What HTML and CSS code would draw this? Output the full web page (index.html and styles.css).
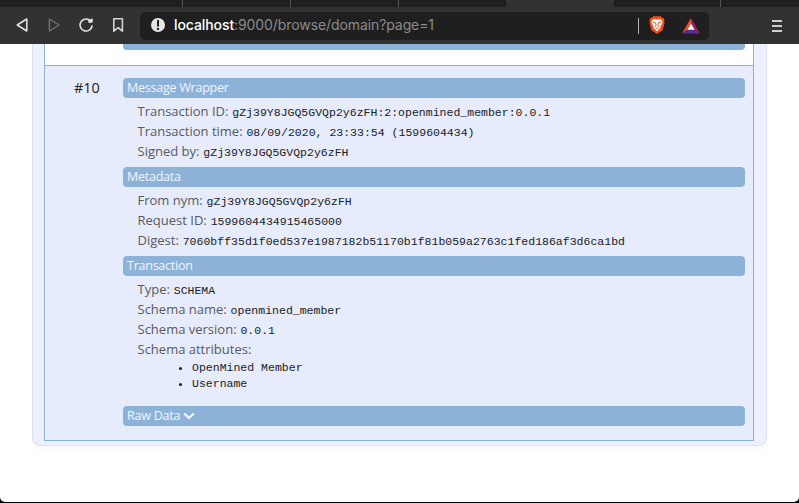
FILE: index.html
```html
<!DOCTYPE html>
<html lang="en">
<head>
<meta charset="utf-8">
<title>Browse domain</title>
<link rel="stylesheet" href="styles.css">
</head>
<body>
<div class="window">
  <header class="chrome">
    <div class="tabs"><i class="first"></i><i></i><i></i><i></i><i class="active"></i><i></i><i class="last"></i></div>
    <div class="toolbar">
      <nav class="nav">
        <svg width="14" height="16" viewBox="0 0 14 16"><path d="M11.8 2v12L2.2 8z" fill="none" stroke="#e4e4e4" stroke-width="1.5" stroke-linejoin="round"/></svg>
        <svg width="14" height="16" viewBox="0 0 14 16"><path d="M2.400 2v12L12 8z" fill="none" stroke="#707070" stroke-width="1.4" stroke-linejoin="round"/></svg>
        <svg width="14" height="16" viewBox="0 0 14 16"><path d="M9.600 2.600A6 6 0 1 0 13 9" fill="none" stroke="#e4e4e4" stroke-width="1.6" stroke-linecap="round"/><path d="M9 3.300 12.800 1.500c.7 0 .9.3.9.8v3.200l-4 .4z" fill="#e4e4e4"/></svg>
        <svg width="14" height="16" viewBox="0 0 14 16"><path d="M2.800 1.800h8.600v12.400L7.100 10.700 2.800 14.200z" fill="none" stroke="#d4d4d4" stroke-width="1.6" stroke-linejoin="round"/></svg>
      </nav>
      <div class="address">
        <svg class="info" width="14" height="14" viewBox="0 0 14 14"><circle cx="7" cy="7" r="7" fill="#e6e6e6"/><path d="M7 2.700v5" stroke="#1f1f1f" stroke-width="2" stroke-linecap="round"/><circle cx="7" cy="10.900" r="1.200" fill="#1f1f1f"/></svg>
        <span class="url"><b>localhost</b>:9000/browse/domain?page=1</span>
        <span class="divider"></span>
        <svg class="lion" width="16" height="18" viewBox="0 0 16 18"><path d="M4.200.3h7.600l1.300 1.500 1.600.2.9 2.200-.4 1.400.3 1.700-2 7L8 17.900l-5.500-3.600-2-7 .3-1.700-.4-1.400L1.300 2l1.600-.2z" fill="#f4501e"/><path d="M4.500 3 8 3.500 11.500 3l2 2.600-.5 2.500-1.800 2.500.3 1.400L8 15.300 4.500 12l.3-1.400L3 8.100l-.5-2.500z" fill="#fff"/><path d="m3.700 6 3 .8.4 3L5.700 11M12.300 6l-3 .8-.4 3 1.400 1.200M6.500 12.700 8 11.800l1.500.9" fill="none" stroke="#f4501e" stroke-width="1"/></svg>
        <svg class="bat" width="18" height="16" viewBox="0 0 18 16"><path d="M9 0v5.500L5.500 11.600 0 15.500z" fill="#ff4724"/><path d="m9 0 9 15.500-5.500-3.900L9 5.500z" fill="#9e1f63"/><path d="M0 15.500 5.500 11.600h7l5.500 3.900z" fill="#5c2d91"/><path d="m9 5.500 3.600 6.300H5.400z" fill="#fff"/></svg>
      </div>
      <svg class="menu" width="10" height="12" viewBox="0 0 10 12"><path d="M0 1h10M0 6h10M0 11h10" stroke="#cfcfcf" stroke-width="2"/></svg>
    </div>
  </header>
  <main class="page">
    <section class="card">
      <div class="table">
        <div class="row previous"><div class="bar"></div></div>
        <div class="row">
          <div class="index">#10</div>
          <div class="details">
            <h2 class="bar">Message Wrapper</h2>
            <div class="fields">
              <p>Transaction ID: <code>gZj39Y8JGQ5GVQp2y6zFH:2:openmined_member:0.0.1</code></p>
              <p>Transaction time: <code>08/09/2020, 23:33:54 (1599604434)</code></p>
              <p>Signed by: <code>gZj39Y8JGQ5GVQp2y6zFH</code></p>
            </div>
            <h2 class="bar">Metadata</h2>
            <div class="fields">
              <p>From nym: <code>gZj39Y8JGQ5GVQp2y6zFH</code></p>
              <p>Request ID: <code>1599604434915465000</code></p>
              <p>Digest: <code>7060bff35d1f0ed537e1987182b51170b1f81b059a2763c1fed186af3d6ca1bd</code></p>
            </div>
            <h2 class="bar">Transaction</h2>
            <div class="fields schema">
              <p>Type: <code>SCHEMA</code></p>
              <p>Schema name: <code>openmined_member</code></p>
              <p>Schema version: <code>0.0.1</code></p>
              <p>Schema attributes:</p>
              <ul><li>OpenMined Member</li><li>Username</li></ul>
            </div>
            <h2 class="bar">Raw Data <svg width="12" height="8" viewBox="0 0 12 8"><path d="m1.200 1.500 4.800 4.500 4.800-4.500" fill="none" stroke="#f3f6fd" stroke-width="2.300"/></svg></h2>
          </div>
        </div>
      </div>
    </section>
  </main>
</div>
</body>
</html>
```
FILE: styles.css
```css
* { box-sizing: border-box; }
body { margin: 0; background: #000; overflow: hidden; }
.window { height: 502px; background: #fff; border-radius: 0 0 5px 5px; overflow: hidden; }
.chrome { height: 44px; background: #323232; }
.tabs { display: flex; height: 7px; }
.tabs i { width: 108px; background: #1f1f1f; border-left: 1px solid #555; }
.tabs .first { width: 182px; border-left: 0; }
.tabs .active { background: #323232; border-left: 0; }
.tabs .active + i { width: 106px; border-left: 0; }
.tabs .last { flex: 1; }
.toolbar { display: flex; align-items: center; height: 37px; padding: 0 17px 0 15px; }
.nav { display: flex; gap: 18px; width: 125px; position: relative; top: -1px; }
.nav svg { display: block; }
.address { display: flex; align-items: center; width: 569px; height: 28px; padding-left: 11px; border-radius: 5px; background: #1f1f1f; }
.info { position: relative; top: -1px; }
.url { width: 464px; margin: -2px 0 0 9px; font: 14px/20px Inter, sans-serif; letter-spacing: -.09px; color: #8b8b8b; white-space: nowrap; }
.url b { color: #fff; font-weight: 500; }
.divider { width: 1px; height: 16px; background: #b0b0b0; }
.lion { margin: -1px 0 0 10px; }
.bat { margin-left: 17px; }
.menu { margin-left: auto; }
.page { padding: 0 32px; font-family: "Open Sans", sans-serif; }
.card { height: 402px; padding: 0 12px 5px 11px; background: #edf0fe; border: 1px solid #dbe1f0; border-top: 0; border-radius: 0 0 8px 8px; box-shadow: 0 4px 5px rgba(0, 0, 0, .025); }
.table { border: solid #8bb2d8; border-width: 0 1px 1px; }
.row { display: flex; height: 375px; padding: 12px 8px 0 0; background: #e6ecfc; border-top: 1px solid #8bb2d8; }
.row.previous { height: 21px; padding: 0 8px 0 78px; background: #fff; border: 0; }
.previous .bar { width: 100%; height: 6px; border-radius: 0 0 4px 4px; }
.index { width: 78px; padding-left: 29px; font-size: 14.4px; line-height: 20px; color: #202020; }
.details { flex: 1; }
.bar { height: 20px; margin: 0; padding-left: 4px; border-radius: 4px; background: #8db2d8; color: #f3f6fd; font-size: 12.5px; font-weight: 400; line-height: 20px; letter-spacing: -.24px; }
.fields { height: 69px; padding: 3px 0 0 14.5px; font-size: 13px; color: #58595f; }
.fields.schema { height: 130px; }
.fields p { margin: 0; height: 20px; line-height: 20px; white-space: nowrap; }
code, .fields ul { font-family: "Liberation Mono", monospace; font-size: 11.52px; color: #202124; }
code { margin-left: .5px; }
.fields ul { margin: 1px 0 0; padding-left: 54.5px; line-height: 16px; }
```
